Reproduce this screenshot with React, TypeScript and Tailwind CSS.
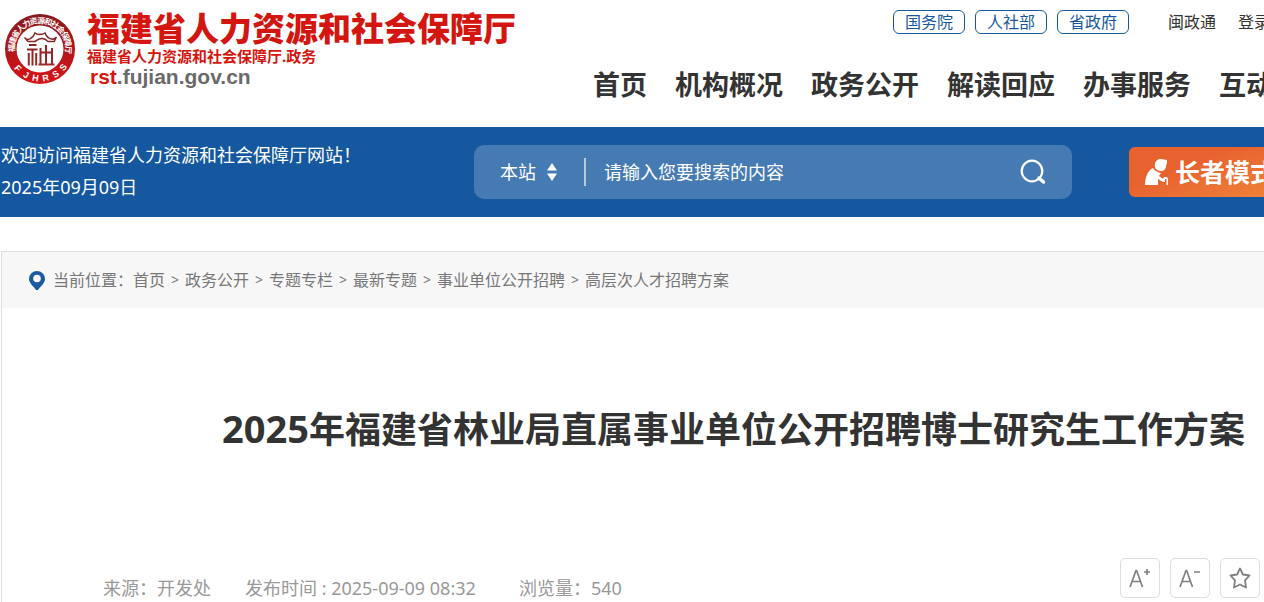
import React, { useState } from "react";

const TOP_LINKS = ["国务院", "人社部", "省政府"];
const NAV_ITEMS = ["首页", "机构概况", "政务公开", "解读回应", "办事服务", "互动交流"];
const CRUMBS = ["首页", "政务公开", "专题专栏", "最新专题", "事业单位公开招聘", "高层次人才招聘方案"];

const SEAL_TOP = "福建省人力资源和社会保障厅".split("");
const SEAL_BOTTOM = [
  { ch: "F", deg: 49 },
  { ch: "J", deg: 28 },
  { ch: "H", deg: 9 },
  { ch: "R", deg: -11 },
  { ch: "S", deg: -32 },
  { ch: "S", deg: -52 },
];

function Seal() {
  return (
    <svg viewBox="0 0 70 70" className="size-[70px] shrink-0" aria-hidden="true">
      <defs>
        <linearGradient id="ring" x1="0" y1="0" x2="0" y2="1">
          <stop offset="0" stopColor="#861a1e" />
          <stop offset="1" stopColor="#d91316" />
        </linearGradient>
        <linearGradient id="mark" x1="0" y1="19" x2="0" y2="53" gradientUnits="userSpaceOnUse">
          <stop offset="0" stopColor="#7c2226" />
          <stop offset="1" stopColor="#a5282b" />
        </linearGradient>
      </defs>
      <circle cx="35" cy="35" r="35" fill="url(#ring)" />
      <circle cx="35" cy="35" r="23.5" fill="#fff" />
      <g fill="#fff" textAnchor="middle" className="font-['Noto_Sans_CJK_SC',sans-serif] text-[8px] font-bold">
        {SEAL_TOP.map((ch, i) => (
          <text key={i} x="35" y="9.500" transform={`rotate(${-88 + i * 15} 35 35)`}>{ch}</text>
        ))}
      </g>
      <g fill="#fff" textAnchor="middle" className="font-['Liberation_Sans',sans-serif] text-[9px] font-bold">
        {SEAL_BOTTOM.map(({ ch, deg }, i) => (
          <text key={i} x="35" y="67.500" transform={`rotate(${deg} 35 35)`}>{ch}</text>
        ))}
      </g>
      {/* 屋檐 */}
      <g fill="none" stroke="url(#mark)">
        <path strokeWidth="1.500" d="M19.500 23.500c1 2 4 2.500 6 1 2.500-1.500 3.500-3 4.500-5.500 2 2 7 2 10 0 1.500 3.500 3.500 5.500 6.500 6 2 .5 4-.5 5-2M20 24l3 3.500M51 24l-2 4M23 27.500h7c2-1 3-3 7-3s4 2 6 3h6" />
        <path strokeWidth="2" d="M24 31h7.500M22 35.500h10.500M27.500 35.500v16M23.800 39v12.500M31.200 39v12.500" />
        <path strokeWidth="2" d="M33.500 50.500h16M35.500 50V34M41 50V31M47 50V34M36 38.500h11" />
      </g>
    </svg>
  );
}

function ElderIcon() {
  return (
    <svg viewBox="0 0 24 26" className="h-[26px] w-6" fill="#fff" aria-hidden="true">
      <path d="M10 5c0-3 3-5 6-5 2 0 4 1 6 1v3l-1 3c0 3-2 5-5 5-4 0-7-3-6-7z" />
      <path d="M8 9c2 3 4 4 8 5l-2 3 4 3 1-2h2c1 0 2 1 2 2v6h-1.500v-6H20v3h-2l-5-3v6H0C0 18 3 11 8 9z" />
    </svg>
  );
}

export default function App() {
  const [keyword, setKeyword] = useState("");

  return (
    <div className="min-h-screen overflow-hidden bg-white font-['Noto_Sans','Noto_Sans_CJK_SC',sans-serif] text-[#333]">
      <header className="flex h-[127px] items-start justify-between">
        <a href="#" className="flex shrink-0 gap-3 pl-[5px] pt-2">
          <div className="pt-1.5">
            <Seal />
          </div>
          <div className="whitespace-nowrap text-[#d3160f]">
            <div className="font-['Noto_Sans_CJK_SC',sans-serif] text-[33px] font-black leading-[38px]">
              福建省人力资源和社会保障厅
            </div>
            <div className="text-[15px] font-bold leading-5">福建省人力资源和社会保障厅.政务</div>
            <div className="pl-[3px] font-['Liberation_Sans',sans-serif] text-[21px] font-bold leading-[22px] text-[#6a6a6a]">
              <span className="text-[#d3160f]">rst</span>.fujian.gov.cn
            </div>
          </div>
        </a>

        <div className="w-[671px] shrink-0 whitespace-nowrap">
          <div className="flex items-center pl-[300px] pt-[10px] text-base leading-[22px]">
            <div className="flex gap-[10px]">
              {TOP_LINKS.map((t) => (
                <a key={t} href="#" className="rounded-md border border-[#15589f] px-[11px] text-[#15589f]">
                  {t}
                </a>
              ))}
            </div>
            <a href="#" className="ml-[39px]">闽政通</a>
            <a href="#" className="ml-[22px]">登录</a>
          </div>
          <nav className="mt-[31px] flex gap-7 text-[27px] font-bold leading-10">
            {NAV_ITEMS.map((t) => (
              <a key={t} href="#">{t}</a>
            ))}
          </nav>
        </div>
      </header>

      <section className="flex h-[90px] items-center justify-between bg-[#15589f] text-lg text-white">
        <div className="w-[474px] shrink-0 pb-0.5 pl-px leading-8">
          <p>欢迎访问福建省人力资源和社会保障厅网站！</p>
          <p>2025年09月09日</p>
        </div>

        <form className="flex h-[54px] flex-1 items-center rounded-[10px] bg-[#467ab3]" onSubmit={(e) => e.preventDefault()}>
          <label className="flex items-center pl-[26px]">
            <select aria-label="搜索范围" className="w-[47px] appearance-none bg-transparent outline-none">
              <option>本站</option>
            </select>
            <svg viewBox="0 0 10 18" className="h-[18px] w-[10px]" fill="#fff" aria-hidden="true">
              <path d="M5 0l5 7.500H0zM0 10.500h10L5 18z" />
            </svg>
          </label>
          <span className="ml-[27px] h-7 w-0.5 bg-[#b5cae1]" />
          <input
            type="text"
            aria-label="搜索"
            placeholder="请输入您要搜索的内容"
            value={keyword}
            onChange={(e) => setKeyword(e.target.value)}
            className="ml-[18px] min-w-0 flex-1 bg-transparent outline-none placeholder:text-white"
          />
          <button type="submit" aria-label="搜索" className="mr-[26px]">
            <svg viewBox="0 0 26 26" className="size-[26px]" fill="none" stroke="#fff" strokeWidth="2.200" aria-hidden="true">
              <circle cx="12" cy="12" r="10.300" />
              <path d="M19 19l4.500 4" strokeWidth="3.400" strokeLinecap="round" />
            </svg>
          </button>
        </form>

        <button
          type="button"
          className="ml-[57px] flex h-[50px] w-[135px] shrink-0 items-center gap-1.5 overflow-hidden whitespace-nowrap rounded-l-md bg-linear-to-br from-[#e8622f] from-40% to-[#ee8139] pl-4 text-[25px] font-bold leading-[46px]"
        >
          <span className="shrink-0">
            <ElderIcon />
          </span>
          长者模式
        </button>
      </section>

      <main className="ml-px mt-[34px] border-l border-t border-[#ddd]">
        <nav className="flex h-14 items-center bg-[#f7f7f7] pl-[27px] text-base text-[#777]">
          <svg viewBox="0 0 16 19" className="mr-2 h-[19px] w-4" aria-hidden="true">
            <path d="M8 0a8 8 0 0 1 8 8c0 4-5 8-7 11H7C5 16 0 12 0 8a8 8 0 0 1 8-8z" fill="#1c5aa0" />
            <circle cx="8" cy="7.500" r="3.800" fill="#f7f7f7" />
          </svg>
          <span>当前位置：</span>
          {CRUMBS.map((c, i) => (
            <React.Fragment key={c}>
              {i > 0 && <span className="w-5 text-center text-sm">&gt;</span>}
              <a href="#">{c}</a>
            </React.Fragment>
          ))}
        </nav>

        <h1 className="whitespace-nowrap pr-[19px] pt-[92px] text-right text-4xl font-bold leading-[56px]">
          <span className="text-[38px]">2025</span>年福建省林业局直属事业单位公开招聘博士研究生工作方案
        </h1>

        <div className="mt-[100px] flex items-start justify-between pl-[101px] pr-1">
          <div className="flex gap-[34px] pt-4 text-lg leading-7 text-[#999]">
            <span>来源：开发处</span>
            <span className="w-[240px]">发布时间 : 2025-09-09 08:32</span>
            <span>浏览量：540</span>
          </div>
          <div className="flex gap-[10px] text-[#808080]">
            <button type="button" aria-label="放大字号" className="flex size-10 items-center justify-center rounded-[5px] border border-[#ddd]">
              <svg viewBox="0 0 22 20" className="h-5 w-[22px]" fill="none" stroke="currentColor" strokeWidth="1.700" aria-hidden="true">
                <path d="M1 19L7 2.500h.6L13.500 19M3 13.500h8.500M15 4h6M18 1v6" />
              </svg>
            </button>
            <button type="button" aria-label="缩小字号" className="flex size-10 items-center justify-center rounded-[5px] border border-[#ddd]">
              <svg viewBox="0 0 22 20" className="h-5 w-[22px]" fill="none" stroke="currentColor" strokeWidth="1.700" aria-hidden="true">
                <path d="M1 19L7 2.500h.6L13.500 19M3 13.500h8.500M15 4h6" />
              </svg>
            </button>
            <button type="button" aria-label="收藏" className="flex size-10 items-center justify-center rounded-[5px] border border-[#ddd]">
              <svg viewBox="0 0 22 22" className="size-[22px]" fill="none" stroke="currentColor" strokeWidth="1.800" strokeLinejoin="round" aria-hidden="true">
                <path d="M11 1.500l3 6 6.500 1-4.500 4.800 1 7.200-6-3-6 3 1-7.200L1.500 8.500l6.500-1z" />
              </svg>
            </button>
          </div>
        </div>
      </main>
    </div>
  );
}
